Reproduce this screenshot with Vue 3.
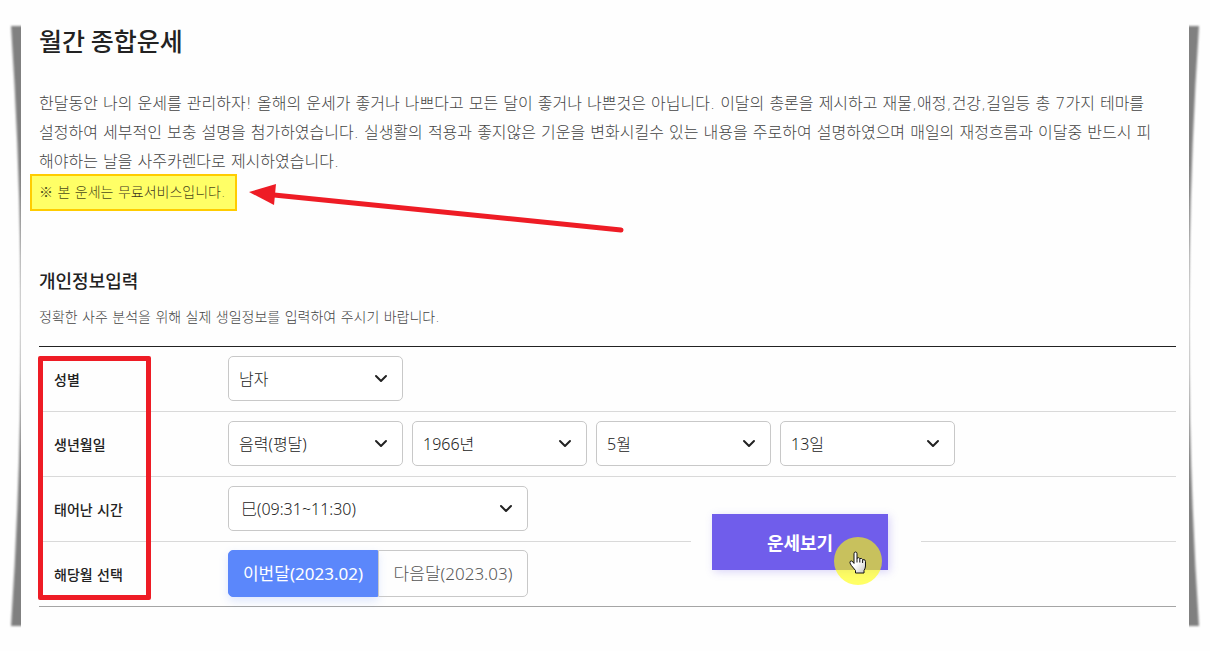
<script setup>
import { ref } from 'vue'

const gender = ref('남자')
const month = ref('now')

const birth = ref([
  { id: 'calendar', label: '달력', value: '음력(평달)', options: ['음력(평달)', '음력(윤달)', '양력'] },
  { id: 'year', label: '년', value: '1966년', options: ['1965년', '1966년', '1967년'] },
  { id: 'month', label: '월', value: '5월', options: ['4월', '5월', '6월'] },
  { id: 'day', label: '일', value: '13일', options: ['12일', '13일', '14일'] }
])
const hour = ref('巳(09:31~11:30)')
</script>

<template>
  <div class="page">
    <svg class="edge left" viewBox="0 0 20 620" preserveAspectRatio="none" aria-hidden="true">
      <path d="M24 10H10Q30 310 10 610H24Z" />
    </svg>
    <svg class="edge right" viewBox="0 0 20 620" preserveAspectRatio="none" aria-hidden="true">
      <path d="M-4 10H10Q-10 310 10 610H-4Z" />
    </svg>

    <main class="panel">
      <h1>월간 종합운세</h1>
      <p class="intro">한달동안 나의 운세를 관리하자! 올해의 운세가 좋거나 나쁘다고 모든 달이 좋거나 나쁜것은 아닙니다. 이달의 총론을 제시하고 재물,애정,건강,길일등 총 7가지 테마를<br>설정하여 세부적인 보충 설명을 첨가하였습니다. 실생활의 적용과 좋지않은 기운을 변화시킬수 있는 내용을 주로하여 설명하였으며 매일의 재정흐름과 이달중 반드시 피<br>해야하는 날을 사주카렌다로 제시하였습니다.</p>
      <div class="note-row">
        <p class="note"><span class="mark">※</span> 본 운세는 <span class="free">무료서비스</span>입니다.</p>
        <svg class="arrow" width="380" height="56" viewBox="0 0 380 56" aria-hidden="true">
          <path d="M25 12L372 47" />
          <polygon points="0,9 27,1 25,22" />
        </svg>
      </div>

      <h2>개인정보입력</h2>
      <p class="guide">정확한 사주 분석을 위해 실제 생일정보를 입력하여 주시기 바랍니다.</p>

      <form class="form" @submit.prevent>
        <div class="row">
          <label class="name" for="gender">성별</label>
          <div class="select">
            <select id="gender" v-model="gender">
              <option>남자</option>
              <option>여자</option>
            </select>
            <svg width="14" height="9" viewBox="0 0 14 9" aria-hidden="true"><path d="M2 2l5 5 5-5" /></svg>
          </div>
        </div>
        <div class="row">
          <label class="name" for="calendar">생년월일</label>
          <div v-for="b in birth" :key="b.id" class="select">
            <select :id="b.id" v-model="b.value" :aria-label="b.label">
              <option v-for="o in b.options" :key="o">{{ o }}</option>
            </select>
            <svg width="14" height="9" viewBox="0 0 14 9" aria-hidden="true"><path d="M2 2l5 5 5-5" /></svg>
          </div>
        </div>
        <div class="row">
          <label class="name" for="hour">태어난 시간</label>
          <div class="select wide">
            <select id="hour" v-model="hour">
              <option>辰(07:31~09:30)</option>
              <option>巳(09:31~11:30)</option>
              <option>午(11:31~13:30)</option>
            </select>
            <svg width="14" height="9" viewBox="0 0 14 9" aria-hidden="true"><path d="M2 2l5 5 5-5" /></svg>
          </div>
        </div>
        <div class="row" role="radiogroup" aria-labelledby="month-name">
          <span id="month-name" class="name">해당월 선택</span>
          <div class="months">
            <label :class="{ on: month === 'now' }"><input v-model="month" type="radio" name="target" value="now">이번달(2023.02)</label>
            <label :class="{ on: month === 'next' }"><input v-model="month" type="radio" name="target" value="next">다음달(2023.03)</label>
          </div>
        </div>
        <div class="frame"></div>
        <div class="action">
          <button type="submit">운세보기</button>
          <div class="spot">
            <svg width="18" height="23" viewBox="0 0 18 23" aria-hidden="true">
              <defs>
                <linearGradient id="hand" x1="0" y1="0" x2="1" y2="1">
                  <stop offset="0.5" stop-color="#fff" />
                  <stop offset="1" stop-color="#c4c4c4" />
                </linearGradient>
              </defs>
              <path fill="url(#hand)" d="M6.5 22V19.5L2.2 14.3Q0 11.4 1.4 10.2Q2.6 9.4 4 11L5 12.4V2.7Q5 1 6.5 1Q8 1 8 2.7V7.2Q10 6 10.8 7.6Q12.8 6.8 13.6 8.6Q16.5 8 16.5 10.6V15Q16.5 17 15 19.5V22Z" />
              <path d="M8 7V11.5M10.8 8V11.5M13.6 9V12" />
            </svg>
          </div>
        </div>
      </form>
    </main>
  </div>
</template>

<style>
body {
  margin: 0;
  background: #fefefe;
}
</style>

<style scoped>
* {
  box-sizing: border-box;
}
.page {
  position: relative;
  padding: 16px 21px;
  font-family: "Noto Sans CJK KR", sans-serif;
  color: #222;
}
.edge {
  position: absolute;
  top: 16px;
  width: 20px;
  height: 620px;
  overflow: hidden;
}
.edge path {
  fill: #808080;
  filter: blur(1px);
}
.edge.left {
  left: 1px;
}
.edge.right {
  right: 1px;
}
.panel {
  padding: 0 13px 12px 18px;
}
h1 {
  margin: 0;
  font-size: 25px;
  line-height: 48px;
  font-weight: 500;
}
.intro {
  margin: 25px 0 0;
  font-family: "DejaVu Sans", "Noto Sans CJK KR", sans-serif;
  font-size: 16px;
  line-height: 29px;
  font-weight: 300;
  color: #444;
  word-break: break-all;
}
.note-row {
  display: flex;
  align-items: flex-start;
  gap: 12px;
  height: 60px;
  margin-left: -9px;
}
.note {
  flex: none;
  margin: -2px 0 0;
  padding: 0 10px 0 7px;
  border: 2px solid #fc0;
  background: #ff6;
  font-family: "DejaVu Sans", "Noto Sans CJK KR", sans-serif;
  font-size: 14px;
  line-height: 33px;
  font-weight: 300;
  color: #4d4d1a;
}
.mark {
  font-family: "Noto Sans CJK KR", sans-serif;
  line-height: 20px;
}
.free {
  color: #40351f;
}
.arrow {
  margin-top: 7px;
  fill: #ee1c25;
}
.arrow path {
  stroke: #ee1c25;
  stroke-width: 5;
  stroke-linecap: round;
}
h2 {
  margin: 31px 0 0;
  font-size: 18px;
  line-height: 26px;
  font-weight: 500;
}
.guide {
  margin: 14px 0 19px;
  font-family: "DejaVu Sans", "Noto Sans CJK KR", sans-serif;
  font-size: 14px;
  line-height: 20px;
  font-weight: 300;
  color: #444;
}
.form {
  position: relative;
  border-top: 1px solid #222;
}
.row {
  display: flex;
  align-items: center;
  gap: 9px;
  height: 65px;
  padding-bottom: 1px;
  border-bottom: 1px solid #d9d9d9;
}
.row:nth-child(4) {
  border-color: #a5a5a5;
}
.name {
  width: 180px;
  padding: 2px 0 0 15px;
  font-family: "DejaVu Sans", "Noto Sans CJK KR", sans-serif;
  font-size: 14px;
  line-height: 20px;
  font-weight: 500;
}
.select {
  position: relative;
  width: 175px;
}
.select.wide {
  width: 300px;
}
select {
  display: block;
  width: 100%;
  height: 45px;
  padding: 0 30px 0 10px;
  border: 1px solid #c8c8c8;
  border-radius: 5px;
  background: #fff;
  font: 300 16px "Noto Sans", "Noto Sans CJK KR", sans-serif;
  color: #222;
  appearance: none;
}
.wide select {
  padding-left: 12px;
}
.select svg {
  position: absolute;
  top: 18px;
  right: 15px;
  fill: none;
  stroke: #222;
  stroke-width: 2;
  stroke-linecap: round;
  stroke-linejoin: round;
  pointer-events: none;
}
.months {
  display: flex;
  width: 300px;
  height: 47px;
}
.months label {
  position: relative;
  width: 150px;
  border: 1px solid #c8c8c8;
  font-family: "Noto Sans", "Noto Sans CJK KR", sans-serif;
  font-size: 17px;
  line-height: 45px;
  font-weight: 300;
  text-align: center;
  color: #555;
}
.months label:first-child {
  border-radius: 5px 0 0 5px;
}
.months label:last-child {
  border-radius: 0 5px 5px 0;
}
.months .on {
  border-color: #5b87fb;
  background: #5b87fb;
  box-shadow: 0 4px 10px #5b87fb33;
  font-weight: 400;
  color: #fff;
}
.months input {
  position: absolute;
  opacity: 0;
}
.frame {
  position: absolute;
  top: 9px;
  left: -1px;
  width: 113px;
  bottom: 7px;
  border: 5px solid #ee1c25;
  border-radius: 2px;
}
.action {
  position: absolute;
  left: 652px;
  bottom: 25px;
  width: 230px;
  padding: 0 33px 12px 21px;
  background: #fefefe;
}
button {
  display: block;
  width: 100%;
  height: 56px;
  border: 0;
  background: #705deb;
  box-shadow: 2px 2px 8px #705deb40;
  font: 700 18px "Noto Sans CJK KR", sans-serif;
  color: #fff;
}
.spot {
  position: absolute;
  top: 23px;
  right: 39px;
  display: flex;
  align-items: center;
  justify-content: center;
  width: 48px;
  height: 48px;
  border-radius: 50%;
  background: rgba(255, 255, 6, 0.62);
}
.spot svg {
  margin-top: 3px;
  fill: none;
  stroke: #111;
  stroke-width: 1;
}
</style>
